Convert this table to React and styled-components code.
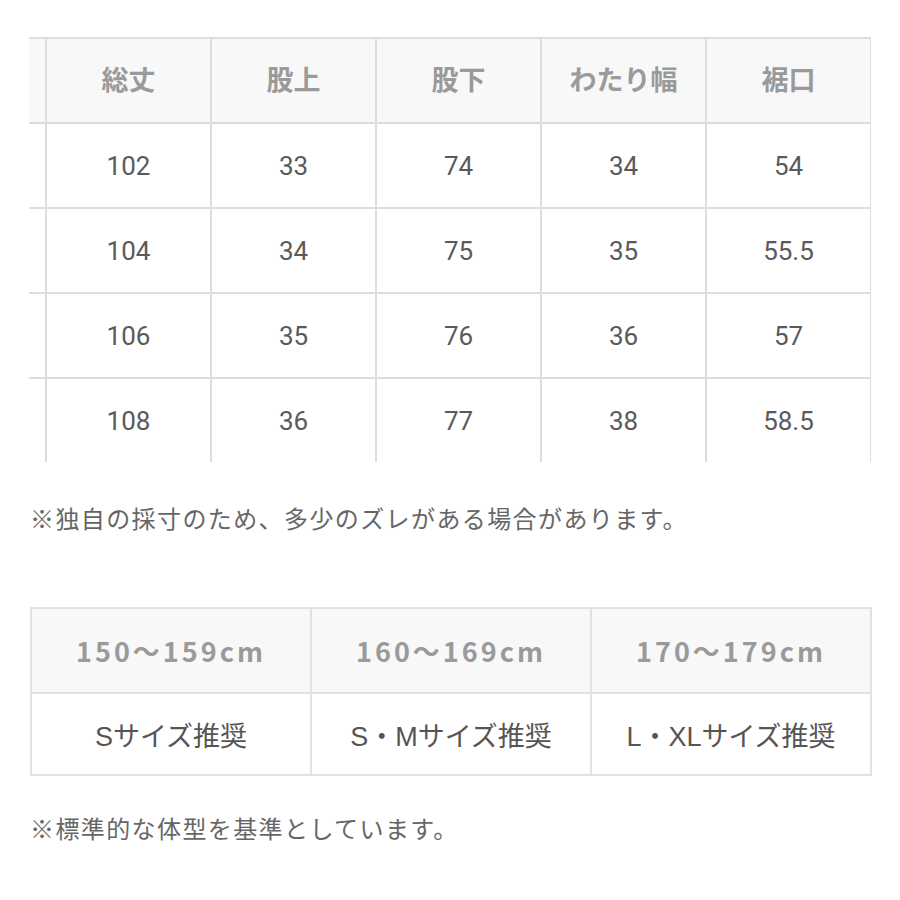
import React from "react"
import styled, { createGlobalStyle } from "styled-components"

const GlobalStyle = createGlobalStyle`
  body {
    margin: 0;
    background: #fff;
    font-family: Roboto, "Noto Sans CJK JP", sans-serif;
  }
`

const Page = styled.div`
  width: 900px;
  height: 900px;
  padding: 37px 0 0 29px;
  box-sizing: border-box;
  overflow: hidden;
`

const Clip = styled.div`
  width: 842px;
  height: 425px;
  overflow: hidden;
`

const SizeGrid = styled.div`
  display: grid;
  grid-template-columns: repeat(6, 163px);
  grid-auto-rows: 83px;
  gap: 2px;
  padding: 2px 2px 0 2px;
  margin-left: -149px;
  width: max-content;
  background: #dddddd;
`

const Cell = styled.div`
  display: flex;
  align-items: center;
  justify-content: center;
  padding-bottom: ${(p) => (p.$head ? "4px" : "0")};
  background: ${(p) => (p.$head ? "#f8f8f8" : "#fff")};
  color: ${(p) => (p.$head ? "#9a9a9a" : "#5a5a5a")};
  font-family: ${(p) =>
    p.$head ? '"Noto Sans CJK JP", sans-serif' : 'Roboto, "Noto Sans CJK JP", sans-serif'};
  font-size: ${(p) => (p.$head ? "27px" : "26px")};
  font-weight: ${(p) => (p.$head ? 700 : 400)};
`

const Note = styled.p`
  margin: ${(p) => p.$top}px 0 0 1px;
  font-family: "Noto Sans CJK JP", sans-serif;
  font-size: 24px;
  line-height: 36px;
  letter-spacing: 1.4px;
  color: #666;
`

const HeightGrid = styled.div`
  display: grid;
  grid-template-columns: repeat(3, 278px);
  grid-template-rows: 83px 80px;
  gap: 2px;
  padding: 2px;
  margin: 71px 0 0 1px;
  width: max-content;
  background: #e2e2e2;
`

const HeightCell = styled.div`
  display: flex;
  align-items: center;
  justify-content: center;
  background: ${(p) => (p.$head ? "#f8f8f8" : "#fff")};
  color: ${(p) => (p.$head ? "#9a9a9a" : "#555")};
  font-family: ${(p) =>
    p.$head ? '"Noto Sans CJK JP", sans-serif' : '"Liberation Sans", "Noto Sans CJK JP", sans-serif'};
  font-size: 27px;
  font-weight: ${(p) => (p.$head ? 700 : 400)};
  letter-spacing: ${(p) => (p.$head ? "3px" : "0")};
`

const headers = ["", "総丈", "股上", "股下", "わたり幅", "裾口"]
const rows = [
  ["", "102", "33", "74", "34", "54"],
  ["", "104", "34", "75", "35", "55.5"],
  ["", "106", "35", "76", "36", "57"],
  ["", "108", "36", "77", "38", "58.5"],
]

const heights = ["150〜159cm", "160〜169cm", "170〜179cm"]
const advice = ["Sサイズ推奨", "S・Mサイズ推奨", "L・XLサイズ推奨"]

export default function App() {
  return (
    <>
      <GlobalStyle />
      <Page>
        <Clip>
          <SizeGrid>
            {headers.map((h, i) => (
              <Cell key={"h" + i} $head>
                {h}
              </Cell>
            ))}
            {rows.map((r, ri) =>
              r.map((v, ci) => <Cell key={ri + "-" + ci}>{v}</Cell>)
            )}
          </SizeGrid>
        </Clip>
        <Note $top={38}>※独自の採寸のため、多少のズレがある場合があります。</Note>
        <HeightGrid>
          {heights.map((h) => (
            <HeightCell key={h} $head>
              {h}
            </HeightCell>
          ))}
          {advice.map((a) => (
            <HeightCell key={a}>{a}</HeightCell>
          ))}
        </HeightGrid>
        <Note $top={34}>※標準的な体型を基準としています。</Note>
      </Page>
    </>
  )
}
